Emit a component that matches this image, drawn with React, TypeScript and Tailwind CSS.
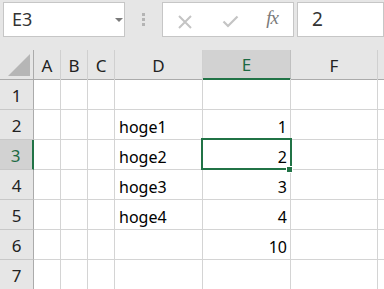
import React from "react";

const cols = ["A", "B", "C", "D", "E", "F"];
const gridCols = "grid grid-cols-[34px_27px_27px_27px_88px_88px_87px_1fr]";

const data: Record<number, { d?: string; e?: string }> = {
  2: { d: "hoge1", e: "1" },
  3: { d: "hoge2", e: "2" },
  4: { d: "hoge3", e: "3" },
  5: { d: "hoge4", e: "4" },
  6: { e: "10" },
};

export default function App() {
  const rows = [1, 2, 3, 4, 5, 6, 7];
  return (
    <div
      className="relative w-[384px] h-[289px] overflow-hidden bg-[#e6e6e6] text-black"
      style={{ fontFamily: '"Noto Sans", "Noto Sans CJK JP", sans-serif' }}
    >
      {/* formula bar */}
      <div className="flex items-start h-[50px] pt-[2px]">
        <div className="relative ml-[3px] w-[127px] h-[35px] bg-white border border-[#c6c6c6] flex items-center pl-[8px] text-[18px] text-[#333]">
          E3
          <div className="absolute left-[111px] top-[15px] w-0 h-0 border-l-[4px] border-r-[4px] border-t-[4px] border-l-transparent border-r-transparent border-t-[#7a7a7a]" />
        </div>
        <div className="ml-[17px] mt-[11px] flex flex-col gap-[2px]">
          <div className="w-[3px] h-[3px] bg-[#b4b4b4]" />
          <div className="w-[3px] h-[3px] bg-[#b4b4b4]" />
          <div className="w-[3px] h-[3px] bg-[#b4b4b4]" />
        </div>
        <div className="relative ml-[17px] w-[137px] h-[35px] bg-white border border-[#c6c6c6]">
          <svg className="absolute left-[14px] top-[11px]" width="16" height="16" viewBox="0 0 16 16">
            <path d="M2 2 L14 14 M14 2 L2 14" stroke="#c4c4c4" strokeWidth="2" fill="none" />
          </svg>
          <svg className="absolute left-[59px] top-[12px]" width="17" height="13" viewBox="0 0 17 13">
            <path d="M1.5 6.5 L6 11 L15.5 1.5" stroke="#c4c4c4" strokeWidth="2.2" fill="none" />
          </svg>
          <div
            className="absolute left-[103px] top-[5px] text-[19px] italic text-[#7a7a7a] leading-none tracking-[-1px]"
            style={{ fontFamily: '"Liberation Serif", serif' }}
          >
            fx
          </div>
        </div>
        <div className="ml-[3px] w-[90px] h-[35px] bg-white border border-[#c6c6c6] flex items-center pl-[14px] text-[19px] text-[#333]">
          2
        </div>
      </div>

      {/* column headers */}
      <div className={`${gridCols} h-[29px]`}>
        <div className="relative border-r border-b border-[#ababab]">
          <svg className="absolute left-[8px] top-[4px]" width="23" height="23" viewBox="0 0 23 23">
            <path d="M0 22 L22 0 L22 22 Z" fill="#b6b6b6" />
          </svg>
        </div>
        {cols.map((c) =>
          c === "E" ? (
            <div
              key={c}
              className="flex items-center justify-center bg-[#d2d2d2] border-r border-r-[#c0c0c0] border-b-2 border-b-[#217346] text-[17px] text-[#1d6a43] pt-[2px]"
            >
              {c}
            </div>
          ) : (
            <div
              key={c}
              className="flex items-center justify-center border-r border-r-[#d0d0d0] border-b border-b-[#ababab] text-[17px] text-[#222] pt-[2px]"
            >
              {c}
            </div>
          )
        )}
        <div className="border-b border-b-[#ababab]" />
      </div>

      {/* rows */}
      {rows.map((r) => {
        const sel = r === 3;
        const h = r === 1 ? "h-[31px]" : "h-[30px]";
        return (
          <div key={r} className={`${gridCols} ${h} bg-white`}>
            <div
              className={
                sel
                  ? "flex items-center justify-center bg-[#d2d2d2] border-r-2 border-r-[#217346] border-b border-b-[#c8c8c8] text-[17px] text-[#1d6a43] pt-[3px] pr-[1px]"
                  : "flex items-center justify-center bg-[#e6e6e6] border-r border-r-[#ababab] border-b border-b-[#c8c8c8] text-[17px] text-[#222] pt-[3px]"
              }
            >
              {r}
            </div>
            <div className="border-r border-b border-[#d4d4d4]" />
            <div className="border-r border-b border-[#d4d4d4]" />
            <div className="border-r border-b border-[#d4d4d4]" />
            <div className="flex items-center border-r border-b border-[#d4d4d4] pl-[4px] pt-[4px] text-[16px]">
              {data[r]?.d ?? ""}
            </div>
            <div className="flex items-center justify-end border-r border-b border-[#d4d4d4] pr-[3px] pt-[4px] text-[16px]">
              {data[r]?.e ?? ""}
            </div>
            <div className="border-r border-b border-[#d4d4d4]" />
            <div className="border-b border-[#d4d4d4]" />
          </div>
        );
      })}

      {/* selection overlay */}
      <div className="absolute left-[201px] top-[138px] w-[91px] h-[32px] border-2 border-[#217346] pointer-events-none" />
      <div className="absolute left-[286px] top-[166px] w-[7px] h-[7px] bg-[#217346] border border-white pointer-events-none" />
    </div>
  );
}
